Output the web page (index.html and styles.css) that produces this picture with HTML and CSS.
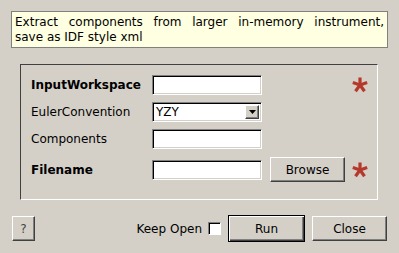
FILE: index.html
```html
<!DOCTYPE html>
<html lang="en">
<head>
    <meta charset="UTF-8">
    <title>ExportInstrument</title>
    <link rel="stylesheet" href="styles.css">
</head>
<body>
    <div class="dialog">
        <div class="tip">
            <span class="tip-line">Extract components from larger in-memory instrument,</span>
            <span>save as IDF style xml</span>
        </div>

        <div class="group">
            <div class="props">
                <label class="lbl req">InputWorkspace</label>
                <input type="text" class="field">
                <span></span>
                <svg class="star" width="16" height="16" viewBox="0 0 16 16"><g stroke="#b5392b" stroke-width="3.2" stroke-linecap="butt"><line x1="8" y1="8" x2="8" y2="0.5"/><line x1="8" y1="8" x2="15.2" y2="5.6"/><line x1="8" y1="8" x2="12.5" y2="14.2"/><line x1="8" y1="8" x2="3.5" y2="14.2"/><line x1="8" y1="8" x2="0.8" y2="5.6"/></g></svg>

                <label class="lbl">EulerConvention</label>
                <div class="combo"><span>YZY</span><span class="drop"><svg width="7" height="4" viewBox="0 0 7 4"><path d="M0 0H7L3.5 4Z" fill="#000"/></svg></span></div>
                <span></span>
                <span></span>

                <label class="lbl">Components</label>
                <input type="text" class="field">
                <span></span>
                <span></span>

                <label class="lbl req">Filename</label>
                <input type="text" class="field">
                <button class="btn browse">Browse</button>
                <svg class="star" width="16" height="16" viewBox="0 0 16 16"><g stroke="#b5392b" stroke-width="3.2" stroke-linecap="butt"><line x1="8" y1="8" x2="8" y2="0.5"/><line x1="8" y1="8" x2="15.2" y2="5.6"/><line x1="8" y1="8" x2="12.5" y2="14.2"/><line x1="8" y1="8" x2="3.5" y2="14.2"/><line x1="8" y1="8" x2="0.8" y2="5.6"/></g></svg>
            </div>
        </div>

        <div class="actions">
            <button class="btn help">?</button>
            <span class="spacer"></span>
            <label class="keep">Keep Open <span class="check"></span></label>
            <button class="btn run">Run</button>
            <button class="btn close">Close</button>
        </div>
    </div>
</body>
</html>
```

FILE: styles.css
```css
body {
    margin: 0;
    background-color: #d4d0c8;
    font-family: "DejaVu Sans", sans-serif;
    font-size: 12px;
    color: #000;
}
.dialog {
    padding: 11px 11px 0 11px;
}
.tip {
    background-color: #ffffe1;
    border: 1px solid #808080;
    padding: 3px 3px 2px 3px;
    line-height: 15px;
}
.tip span {
    display: block;
    white-space: nowrap;
}
.tip .tip-line {
    white-space: normal;
    text-align: justify;
    text-align-last: justify;
}
.group {
    margin: 16px 10px 0 9px;
    border: 1px solid;
    border-color: #404040 #fff #fff #404040;
    padding: 10px 0 16px 10px;
}
.props {
    display: grid;
    grid-template-columns: 121px 118px 82px 16px;
    grid-template-rows: 20px 20px 20px 27px;
    row-gap: 7px;
    align-items: center;
}
.lbl {
    white-space: nowrap;
}
.req {
    font-weight: bold;
}
.field, .combo {
    box-sizing: border-box;
    width: 110px;
    height: 20px;
    margin: 0;
    padding: 0 2px;
    background-color: #fff;
    border: 1px solid;
    border-color: #808080 #fff #fff #808080;
    box-shadow: inset 1px 1px 0 #000, inset -1px -1px 0 #d4d0c8;
    font-family: inherit;
    font-size: 12px;
}
.combo {
    display: flex;
    align-items: center;
    justify-content: space-between;
    padding: 0 2px 0 3px;
    line-height: 15px;
}
.drop {
    box-sizing: border-box;
    width: 14px;
    height: 14px;
    background-color: #d4d0c8;
    border: 1px solid;
    border-color: #fff #404040 #404040 #fff;
    box-shadow: inset -1px -1px 0 #808080;
    display: flex;
    align-items: center;
    justify-content: center;
}
.star {
    display: block;
}
.btn {
    box-sizing: border-box;
    height: 25px;
    margin: 0;
    padding: 0;
    background-color: #d4d0c8;
    border: 1px solid;
    border-color: #fff #404040 #404040 #fff;
    box-shadow: inset -1px -1px 0 #808080;
    font-family: inherit;
    font-size: 12px;
    color: #000;
}
.browse {
    width: 75px;
}
.actions {
    display: flex;
    align-items: center;
    margin: 15px 1px 0 1px;
}
.help {
    width: 23px;
    color: #444;
    font-size: 12px;
}
.spacer {
    flex: 1;
}
.keep {
    display: flex;
    align-items: center;
    gap: 6px;
    margin-right: 7px;
}
.check {
    box-sizing: border-box;
    width: 13px;
    height: 13px;
    background-color: #fff;
    border: 1px solid;
    border-color: #808080 #fff #fff #808080;
    box-shadow: inset 1px 1px 0 #000;
}
.run {
    width: 77px;
    height: 27px;
    border: 1px solid #000;
    box-shadow: inset 1px 1px 0 #fff, inset -1px -1px 0 #404040, inset -2px -2px 0 #808080;
    margin-right: 7px;
}
.close {
    width: 75px;
}
```
